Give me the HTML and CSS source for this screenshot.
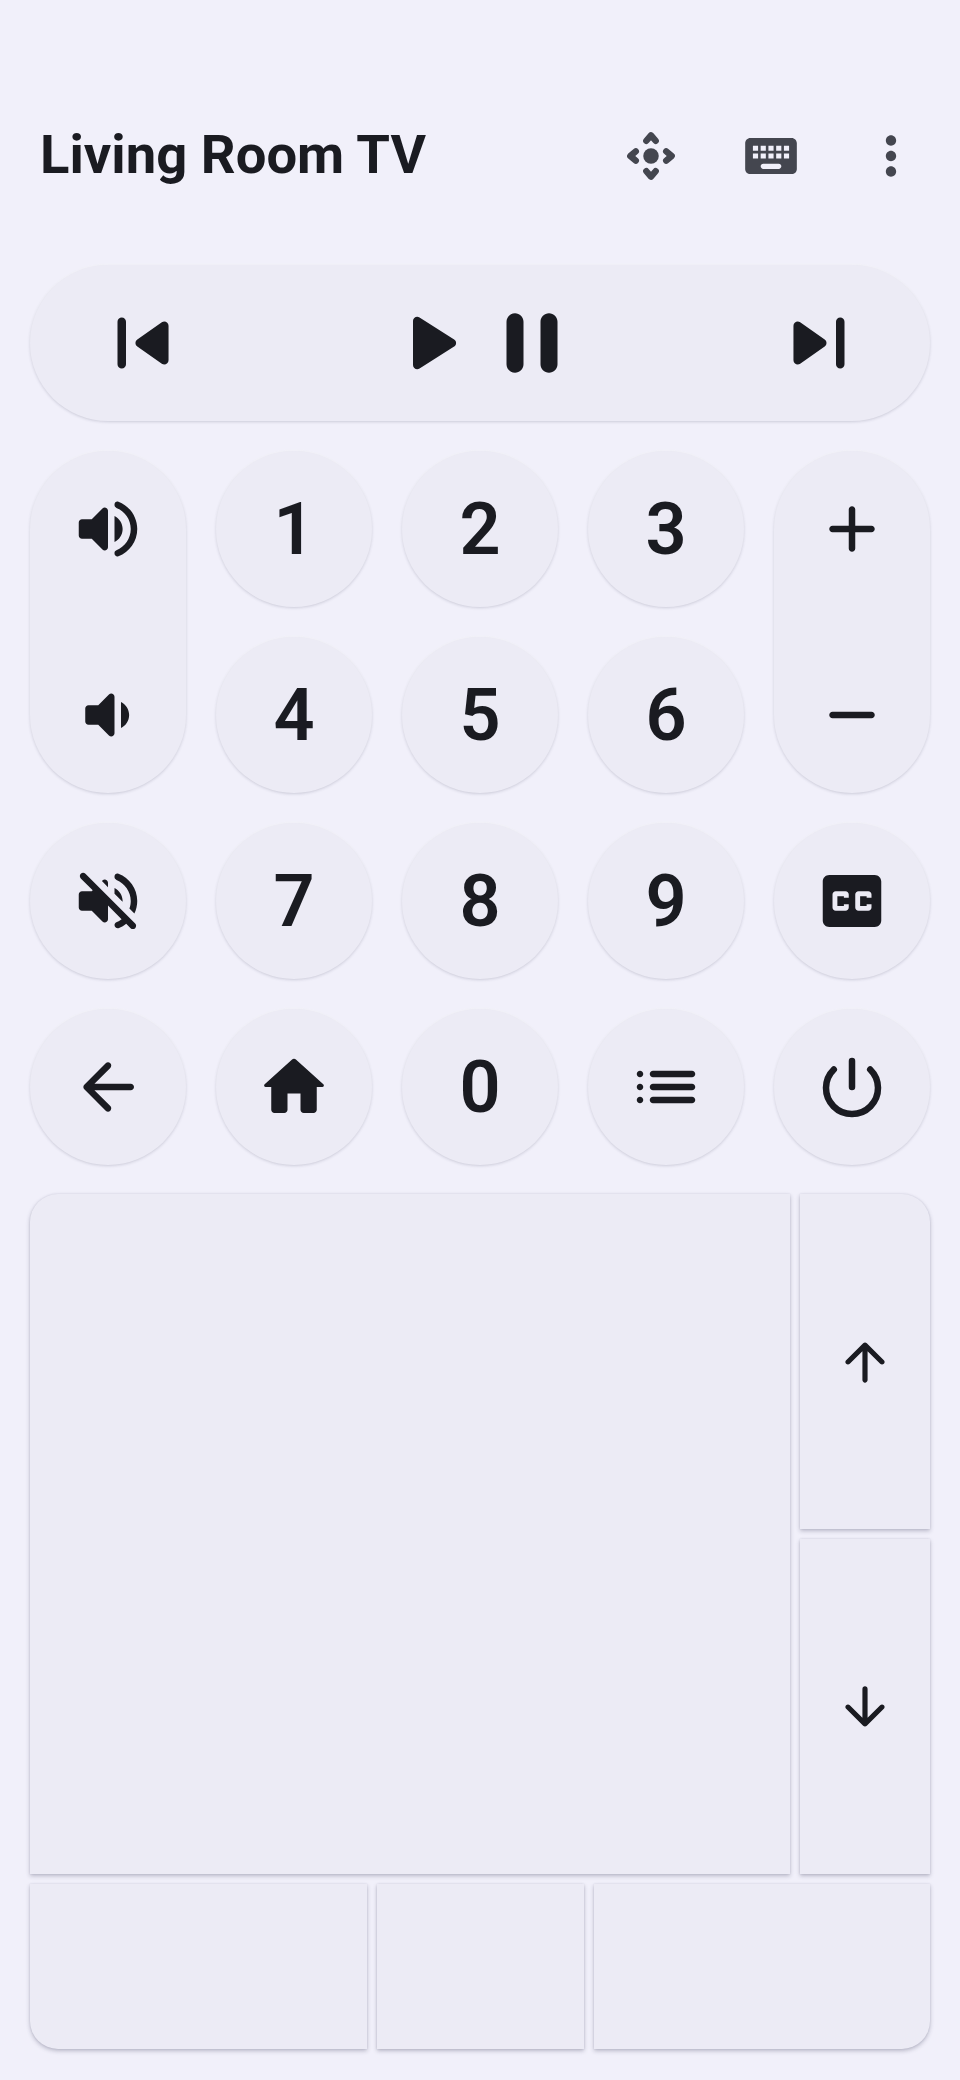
FILE: index.html
```html
<!DOCTYPE html>
<html lang="en">
<head>
    <meta charset="UTF-8">
    <meta name="viewport" content="width=device-width, initial-scale=1.0">
    <title>Living Room TV</title>
    <link rel="stylesheet" href="styles.css">
</head>
<body>

<div class="header">
    <h1 class="title">Living Room TV</h1>
    <div class="header-icons">
        <button class="head-btn">
            <svg viewBox="0 0 24 24"><path class="line chevron" d="M10.2 6.1L12 4l1.800 2.100M17.900 10.200L20 12l-2.100 1.800M13.800 17.900L12 20l-1.800-2.100M6.100 13.800L4 12l2.100-1.800"/><circle cx="12" cy="12" r="3"/></svg>
        </button>
        <button class="head-btn">
            <svg viewBox="0 0 24 24"><path d="M20 5H4c-1.1 0-1.99.9-1.99 2L2 17c0 1.1.9 2 2 2h16c1.1 0 2-.9 2-2V7c0-1.1-.9-2-2-2zm-9 3h2v2h-2V8zm0 3h2v2h-2v-2zM8 8h2v2H8V8zm0 3h2v2H8v-2zm-1 2H5v-2h2v2zm0-3H5V8h2v2zm8 7H9c-.55 0-1-.45-1-1s.45-1 1-1h6c.55 0 1 .45 1 1s-.45 1-1 1zm1-4h-2v-2h2v2zm0-3h-2V8h2v2zm3 3h-2v-2h2v2zm0-3h-2V8h2v2z"/></svg>
        </button>
        <button class="head-btn">
            <svg viewBox="0 0 24 24"><path d="M12 8c1.1 0 2-.9 2-2s-.9-2-2-2-2 .9-2 2 .9 2 2 2zm0 2c-1.1 0-2 .9-2 2s.9 2 2 2 2-.9 2-2-.9-2-2-2zm0 6c-1.1 0-2 .9-2 2s.9 2 2 2 2-.9 2-2-.9-2-2-2z"/></svg>
        </button>
    </div>
</div>

<!-- transport -->
<div class="media">
    <button class="media-btn">
        <svg viewBox="0 0 24 24"><path d="M7 6c.55 0 1 .45 1 1v10c0 .55-.45 1-1 1s-1-.45-1-1V7c0-.55.45-1 1-1zm3.66 6.82l5.77 4.07c.66.47 1.58-.01 1.58-.82V7.93c0-.81-.91-1.28-1.58-.82l-5.77 4.07c-.57.4-.57 1.24 0 1.64z"/></svg>
    </button>
    <div class="media-mid">
        <button class="media-btn">
            <svg viewBox="0 0 24 24"><path d="M8 6.82v10.36c0 .79.87 1.27 1.54.84l8.14-5.18c.62-.39.62-1.29 0-1.69L9.54 5.98C8.87 5.55 8 6.03 8 6.82z"/></svg>
        </button>
        <button class="media-btn">
            <svg viewBox="0 0 24 24"><path d="M8 19c1.1 0 2-.9 2-2V7c0-1.1-.9-2-2-2s-2 .9-2 2v10c0 1.1.9 2 2 2zm6-12v10c0 1.1.9 2 2 2s2-.9 2-2V7c0-1.1-.9-2-2-2s-2 .9-2 2z"/></svg>
        </button>
    </div>
    <button class="media-btn">
        <svg viewBox="0 0 24 24"><path d="M17 18c-.55 0-1-.45-1-1V7c0-.55.45-1 1-1s1 .45 1 1v10c0 .55-.45 1-1 1zm-3.66-6.82L7.57 7.11C6.91 6.64 5.99 7.12 5.99 7.93v8.14c0 .81.91 1.28 1.58.82l5.77-4.07c.57-.4.57-1.24 0-1.64z"/></svg>
    </button>
</div>

<!-- number pad -->
<div class="pad">
    <div class="pill">
        <button class="key">
            <svg viewBox="0 0 24 24"><path d="M3 10v4c0 .55.45 1 1 1h3l3.29 3.29c.63.63 1.71.18 1.71-.71V6.41c0-.89-1.08-1.34-1.71-.71L7 9H4c-.55 0-1 .45-1 1zm13.5 2c0-1.77-1.02-3.29-2.5-4.03v8.05c1.48-.73 2.5-2.25 2.5-4.02zM14 4.45v.2c0 .38.25.71.6.85C17.18 6.53 19 9.06 19 12s-1.82 5.47-4.4 6.5c-.36.14-.6.47-.6.85v.2c0 .63.63 1.07 1.21.85C18.6 19.11 21 15.84 21 12s-2.4-7.11-5.79-8.4c-.58-.23-1.21.22-1.21.85z"/></svg>
        </button>
        <button class="key">
            <svg viewBox="0 0 24 24"><path d="M18.5 12c0-1.77-1.02-3.29-2.5-4.03v8.05c1.48-.73 2.5-2.25 2.5-4.02zM5 10v4c0 .55.45 1 1 1h3l3.29 3.29c.63.63 1.71.18 1.71-.71V6.41c0-.89-1.08-1.34-1.71-.71L9 9H6c-.55 0-1 .45-1 1z"/></svg>
        </button>
    </div>
    <button class="key round-key">1</button>
    <button class="key round-key">2</button>
    <button class="key round-key">3</button>
    <div class="pill">
        <button class="key">
            <svg viewBox="0 0 24 24"><path d="M18 13h-5v5c0 .55-.45 1-1 1s-1-.45-1-1v-5H6c-.55 0-1-.45-1-1s.45-1 1-1h5V6c0-.55.45-1 1-1s1 .45 1 1v5h5c.55 0 1 .45 1 1s-.45 1-1 1z"/></svg>
        </button>
        <button class="key">
            <svg viewBox="0 0 24 24"><path d="M18 13H6c-.55 0-1-.45-1-1s.45-1 1-1h12c.55 0 1 .45 1 1s-.45 1-1 1z"/></svg>
        </button>
    </div>
    <button class="key round-key">4</button>
    <button class="key round-key">5</button>
    <button class="key round-key">6</button>

    <button class="key round-key">
        <svg viewBox="0 0 24 24"><path d="M3.63 3.63c-.39.39-.39 1.02 0 1.41L7.29 8.7 7 9H4c-.55 0-1 .45-1 1v4c0 .55.45 1 1 1h3l3.29 3.29c.63.63 1.71.18 1.71-.71v-4.17l4.18 4.18c-.49.37-1.02.68-1.6.91-.36.15-.58.53-.58.92 0 .72.73 1.18 1.39.91.8-.33 1.55-.77 2.22-1.31l1.34 1.34c.39.39 1.02.39 1.41 0 .39-.39.39-1.02 0-1.41L5.05 3.63c-.39-.39-1.02-.39-1.42 0zM19 12c0 .82-.15 1.61-.41 2.34l1.53 1.53c.56-1.17.88-2.48.88-3.87 0-3.83-2.4-7.11-5.78-8.4-.59-.23-1.22.23-1.22.86v.19c0 .38.25.71.61.85C17.18 6.54 19 9.06 19 12zm-8.71-6.29l-.17.17L12 7.76V6.41c0-.89-1.08-1.33-1.71-.7zM16.5 12c0-1.77-1.02-3.29-2.5-4.03v1.79l2.48 2.48c.01-.08.02-.16.02-.24z"/></svg>
    </button>
    <button class="key round-key">7</button>
    <button class="key round-key">8</button>
    <button class="key round-key">9</button>
    <button class="key round-key">
        <svg viewBox="0 0 24 24"><path d="M19 4H5c-1.11 0-2 .9-2 2v12c0 1.1.89 2 2 2h14c1.1 0 2-.9 2-2V6c0-1.1-.9-2-2-2zm-8 7H9.5v-.5h-2v3h2V13H11v1c0 .55-.45 1-1 1H7c-.55 0-1-.45-1-1v-4c0-.55.45-1 1-1h3c.55 0 1 .45 1 1v1zm7 0h-1.5v-.5h-2v3h2V13H18v1c0 .55-.45 1-1 1h-3c-.55 0-1-.45-1-1v-4c0-.55.45-1 1-1h3c.55 0 1 .45 1 1v1z"/></svg>
    </button>

    <button class="key round-key">
        <svg viewBox="0 0 24 24"><path d="M19 11H7.83l4.88-4.88c.39-.39.39-1.03 0-1.42-.39-.39-1.02-.39-1.41 0l-6.59 6.59c-.39.39-.39 1.02 0 1.41l6.59 6.59c.39.39 1.02.39 1.41 0 .39-.39.39-1.02 0-1.41L7.83 13H19c.55 0 1-.45 1-1s-.45-1-1-1z"/></svg>
    </button>
    <button class="key round-key">
        <svg viewBox="0 0 24 24"><path d="M10 19v-5h4v5c0 .55.45 1 1 1h3c.55 0 1-.45 1-1v-7h1.7c.46 0 .68-.57.33-.87L12.67 3.6c-.38-.34-.96-.34-1.34 0l-8.36 7.53c-.34.3-.13.87.33.87H5v7c0 .55.45 1 1 1h3c.55 0 1-.45 1-1z"/></svg>
    </button>
    <button class="key round-key">0</button>
    <button class="key round-key">
        <svg viewBox="0 0 24 24"><path d="M4 13c.55 0 1-.45 1-1s-.45-1-1-1-1 .45-1 1 .45 1 1 1zm0 4c.55 0 1-.45 1-1s-.45-1-1-1-1 .45-1 1 .45 1 1 1zm0-8c.55 0 1-.45 1-1s-.45-1-1-1-1 .45-1 1 .45 1 1 1zm4 4h12c.55 0 1-.45 1-1s-.45-1-1-1H8c-.55 0-1 .45-1 1s.45 1 1 1zm0 4h12c.55 0 1-.45 1-1s-.45-1-1-1H8c-.55 0-1 .45-1 1s.45 1 1 1zM7 8c0 .55.45 1 1 1h12c.55 0 1-.45 1-1s-.45-1-1-1H8c-.55 0-1 .45-1 1z"/></svg>
    </button>
    <button class="key round-key">
        <svg viewBox="0 0 24 24"><path class="line" d="M12 4v8M6.400 6.600a8 8 0 1 0 11.200 0"/></svg>
    </button>
</div>

<!-- touch area -->
<div class="touch">
    <div class="touch-row">
        <div class="zone corner-tl"></div>
        <div class="scroll">
            <button class="zone scroll-btn corner-tr">
                <svg viewBox="0 0 24 24"><path d="M13 19V7.83l4.88 4.88c.39.39 1.03.39 1.42 0 .39-.39.39-1.02 0-1.41l-6.59-6.59c-.39-.39-1.02-.39-1.41 0l-6.6 6.58c-.39.39-.39 1.02 0 1.41.39.39 1.02.39 1.41 0L11 7.83V19c0 .55.45 1 1 1s1-.45 1-1z"/></svg>
            </button>
            <button class="zone scroll-btn">
                <svg viewBox="0 0 24 24"><path d="M11 5v11.17l-4.88-4.88c-.39-.39-1.03-.39-1.42 0-.39.39-.39 1.02 0 1.41l6.59 6.59c.39.39 1.02.39 1.41 0l6.59-6.59c.39-.39.39-1.02 0-1.41-.39-.39-1.02-.39-1.41 0L13 16.17V5c0-.55-.45-1-1-1s-1 .45-1 1z"/></svg>
            </button>
        </div>
    </div>
    <div class="click-row">
        <div class="zone corner-bl"></div>
        <div class="zone"></div>
        <div class="zone corner-br"></div>
    </div>
</div>

</body>
</html>
```

FILE: styles.css
```css
* { box-sizing: border-box; }
body { margin: 0; width: 960px; height: 2080px; padding: 0 30px; background-color: #f1f0fa; color: #1a1b21; font-family: Roboto, sans-serif; overflow: hidden; }
button { border: none; padding: 0; background: none; color: inherit; font: inherit; }
svg { display: block; fill: currentColor; }

.header { height: 265px; padding: 46px 8px 0 10px; display: flex; align-items: center; justify-content: space-between; }
.title { margin: 0 0 2px; font-size: 54.4px; font-weight: 700; letter-spacing: 0; }
.header-icons { display: flex; gap: 58px; color: #44464f; }
.head-btn { width: 62px; height: 62px; }
.head-btn svg { width: 62px; height: 62px; }
.line { fill: none; stroke: currentColor; stroke-width: 2; stroke-linecap: round; }
.chevron { stroke-width: 2.5; stroke-linejoin: round; }

.media { height: 156px; padding: 0 60px 0 62px; display: flex; align-items: center; justify-content: space-between; border-radius: 78px; background-color: #ecebf5; box-shadow: 0 1px 3px rgba(60, 60, 90, .2), 0 -1px 2px rgba(255, 255, 255, .5); }
.media-mid { display: flex; }
.media-btn { width: 102px; height: 102px; }
.media-btn svg { width: 102px; height: 102px; }

.pad { margin-top: 30px; display: grid; grid-template-columns: repeat(5, 156px); grid-auto-rows: 156px; gap: 30px; }
.key { display: flex; align-items: center; justify-content: center; font-size: 72px; font-weight: 600; }
.key svg { width: 78px; height: 78px; }
.round-key { border-radius: 50%; background-color: #ecebf5; box-shadow: 0 1px 3px rgba(60, 60, 90, .2), 0 -1px 2px rgba(255, 255, 255, .5); }
.pill { grid-row: span 2; display: flex; flex-direction: column; justify-content: space-between; border-radius: 78px; background-color: #ecebf5; box-shadow: 0 1px 3px rgba(60, 60, 90, .2), 0 -1px 2px rgba(255, 255, 255, .5); }
.pill .key { height: 156px; }

.touch { margin-top: 29px; display: flex; flex-direction: column; gap: 10px; }
.touch-row { height: 680px; display: flex; gap: 10px; }
.touch-row > .zone { flex: 1; }
.scroll { width: 130px; display: flex; flex-direction: column; gap: 10px; }
.click-row { height: 165px; display: grid; grid-template-columns: 337px 207px 1fr; gap: 10px; }
.zone { background-color: #ecebf5; box-shadow: 0 2px 4px rgba(60, 60, 90, .3), 0 0 2px rgba(60, 60, 90, .12); }
.scroll-btn { flex: 1; display: flex; align-items: center; justify-content: center; }
.scroll-btn svg { width: 62px; height: 62px; }
.corner-tl { border-top-left-radius: 28px; }
.corner-tr { border-top-right-radius: 28px; }
.corner-bl { border-bottom-left-radius: 28px; }
.corner-br { border-bottom-right-radius: 28px; }
```
